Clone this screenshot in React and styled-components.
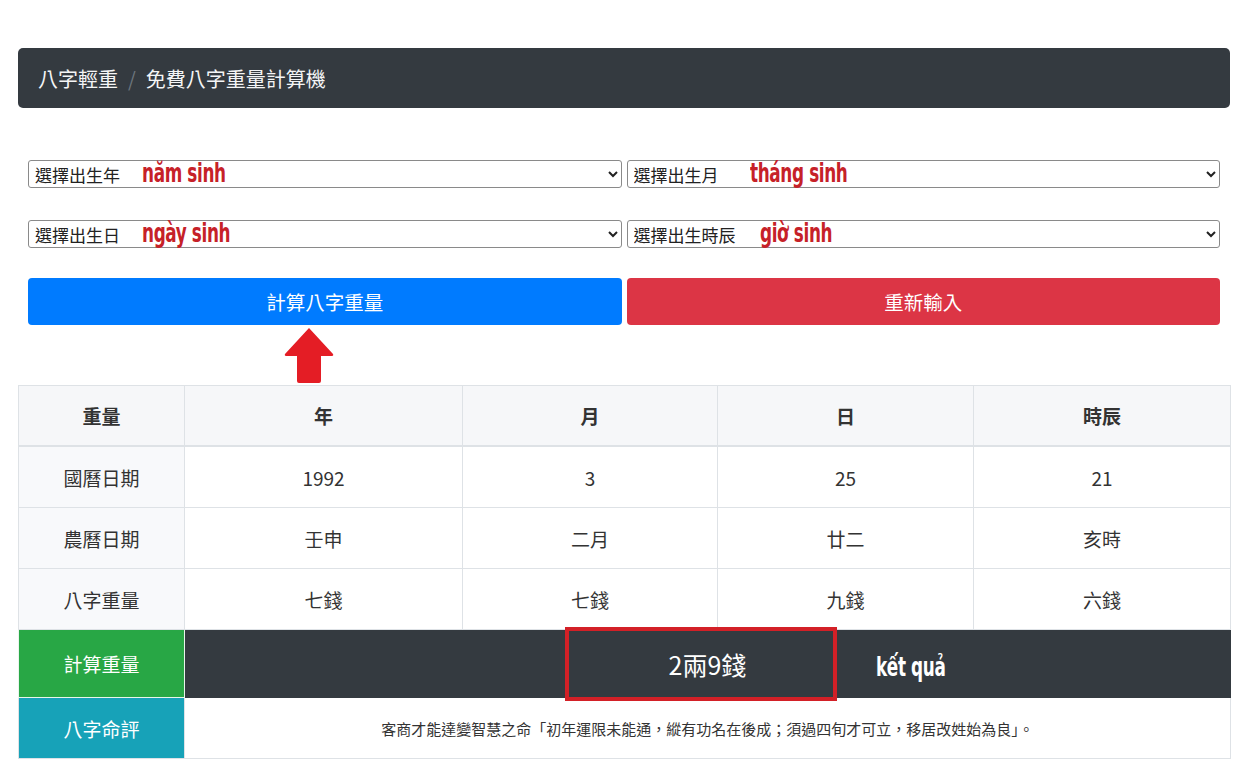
import React from "react"
import styled, { createGlobalStyle } from "styled-components"

const GlobalStyle = createGlobalStyle`
  body {
    margin: 0;
    background: #fff;
    font-family: "Noto Sans CJK TC", "Noto Sans", sans-serif;
    color: #333;
  }
`

const Page = styled.div`
  padding: 48px 26px 4px 18px;
`

const Breadcrumb = styled.nav`
  height: 60px;
  background: #343a40;
  border-radius: 5px;
  display: flex;
  align-items: center;
  padding-left: 20px;
  font-size: 20px;
  color: #f4f5f6;
`

const Sep = styled.span`
  color: #6c757d;
  padding: 0 10px;
`

const Form = styled.div`
  margin-top: 52px;
  padding: 0 10px;
  display: grid;
  grid-template-columns: 1fr 1fr;
  column-gap: 5px;
  row-gap: 32px;
`

const Field = styled.div`
  position: relative;
`

const Select = styled.select`
  width: 100%;
  height: 28px;
  font-family: inherit;
  font-size: 17px;
  line-height: 26px;
  color: #222;
  background: #fff;
  border: 1px solid #8a8a8a;
  border-radius: 3px;
  padding: 0 2px 2px;
`

const Note = styled.span`
  position: absolute;
  z-index: 2;
  left: ${p => p.$left}px;
  top: ${p => p.$top ?? -2}px;
  font-family: "DejaVu Sans Condensed", "Liberation Sans", sans-serif;
  font-weight: 700;
  font-size: 26px;
  letter-spacing: -0.5px;
  transform: scaleX(0.72);
  transform-origin: left center;
  color: ${p => p.$color || "#c62128"};
  pointer-events: none;
  white-space: nowrap;
`

const Buttons = styled.div`
  margin-top: 30px;
  padding: 0 10px;
  display: grid;
  grid-template-columns: 1fr 1fr;
  column-gap: 5px;
`

const Button = styled.button`
  height: 47px;
  border: none;
  border-radius: 4px;
  background: ${p => p.$bg};
  color: #fff;
  font-family: inherit;
  font-size: 19.5px;
`

const ArrowZone = styled.div`
  height: 60px;
  display: flex;
  align-items: flex-end;
  padding-left: 265px;
  padding-bottom: 2px;
  box-sizing: border-box;
`

const Table = styled.table`
  width: 1212px;
  border-collapse: collapse;
  table-layout: fixed;
  text-align: center;
  font-size: 19px;
  border: 1px solid #dee2e6;
`

const Th = styled.th`
  height: 59px;
  background: #f6f7f9;
  font-weight: 700;
  color: #333;
  border: 1px solid #dee2e6;
  border-bottom: 2px solid #dee2e6;
  padding: 0;
`

const Td = styled.td`
  height: ${p => p.$h || 60}px;
  border: 1px solid ${p => p.$line || "#dee2e6"};
  background: ${p => p.$bg || "#fff"};
  color: ${p => p.$color || "#333"};
  font-size: ${p => p.$size || 19}px;
  padding: 0;
  position: relative;
`

const Highlight = styled.div`
  position: absolute;
  z-index: 2;
  left: 380px;
  top: -3px;
  width: 264px;
  height: 66px;
  border: 4px solid #d32027;
  pointer-events: none;
`

const cols = [166, 278, 255, 256, 257]
const head = ["重量", "年", "月", "日", "時辰"]
const rows = [
  ["國曆日期", "1992", "3", "25", "21"],
  ["農曆日期", "壬申", "二月", "廿二", "亥時"],
  ["八字重量", "七錢", "七錢", "九錢", "六錢"],
]

function UpArrow() {
  return (
    <svg width="52" height="56" viewBox="0 0 52 56">
      <path
        d="M26 1 L50 27 Q51 29 48 29 L38 29 L38 54 Q38 56 36 56 L16 56 Q14 56 14 54 L14 29 L4 29 Q1 29 2 27 Z"
        fill="#e41d25"
      />
    </svg>
  )
}

export default function App() {
  return (
    <Page>
      <GlobalStyle />
      <Breadcrumb>
        八字輕重<Sep>/</Sep>免費八字重量計算機
      </Breadcrumb>

      <Form>
        <Field>
          <Select><option>選擇出生年</option></Select>
          <Note $left={114}>năm sinh</Note>
        </Field>
        <Field>
          <Select><option>選擇出生月</option></Select>
          <Note $left={123}>tháng sinh</Note>
        </Field>
        <Field>
          <Select><option>選擇出生日</option></Select>
          <Note $left={114}>ngày sinh</Note>
        </Field>
        <Field>
          <Select><option>選擇出生時辰</option></Select>
          <Note $left={133}>giờ sinh</Note>
        </Field>
      </Form>

      <Buttons>
        <Button $bg="#007bff">計算八字重量</Button>
        <Button $bg="#dc3545">重新輸入</Button>
      </Buttons>

      <ArrowZone>
        <UpArrow />
      </ArrowZone>

      <Table>
        <colgroup>
          {cols.map((w, i) => <col key={i} style={{ width: w }} />)}
        </colgroup>
        <thead>
          <tr>{head.map(h => <Th key={h}>{h}</Th>)}</tr>
        </thead>
        <tbody>
          {rows.map(r => (
            <tr key={r[0]}>
              {r.map((c, i) => (
                <Td key={i} $bg={i === 0 ? "#f8f9fb" : "#fff"}>{c}</Td>
              ))}
            </tr>
          ))}
          <tr>
            <Td $h={67} $bg="#28a745" $color="#fff" $line="#e9f5ec">計算重量</Td>
            <Td $h={67} colSpan={4} $bg="#343a40" $color="#fff" $size={25} $line="#343a40">
              2兩9錢
              <Highlight />
              <Note $left={691} $top={22} $color="#fff">kết quả</Note>
            </Td>
          </tr>
          <tr>
            <Td $bg="#17a2b8" $color="#fff">八字命評</Td>
            <Td colSpan={4} $size={15}>
              客商才能達變智慧之命「初年運限未能通，縱有功名在後成；須過四旬才可立，移居改姓始為良」。
            </Td>
          </tr>
        </tbody>
      </Table>
    </Page>
  )
}
